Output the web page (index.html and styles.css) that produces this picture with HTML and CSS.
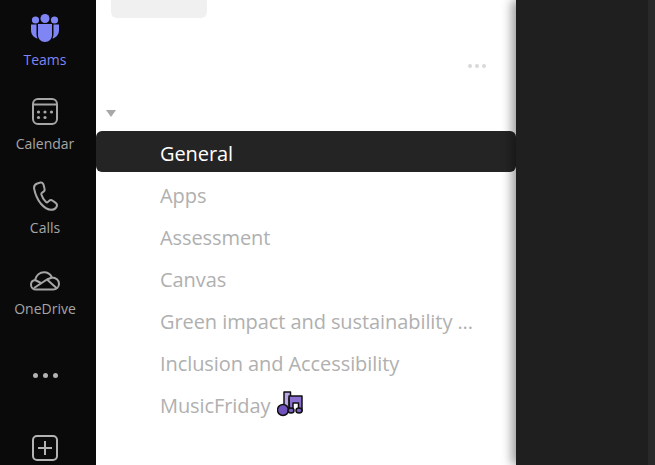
FILE: index.html
```html
<!DOCTYPE html>
<html lang="en">
<head>
  <meta charset="UTF-8" />
  <title>Teams</title>
  <link rel="stylesheet" href="styles.css">
</head>
<body>

<nav class="rail">
  <div class="rail-item active">
    <svg class="rail-icon" width="32" height="30" viewBox="0 0 32 30" fill="#7f85f5">
      <circle cx="16" cy="5.500" r="4.500"/>
      <circle cx="6.500" cy="7" r="3.600"/>
      <circle cx="25.500" cy="7" r="3.600"/>
      <path d="M2 11.500h5.500v9c0 2 .4 3.600 1.200 5C5 25 2 21.500 2 17z"/>
      <path d="M30 11.500h-5.500v9c0 2-.4 3.600-1.200 5C27 25 30 21.500 30 17z"/>
      <path d="M9 11h14v11c0 4-3 7-7 7s-7-3-7-7z"/>
    </svg>
    <span>Teams</span>
  </div>
  <div class="rail-item">
    <svg class="rail-icon" width="28" height="30" viewBox="0 0 28 30" fill="none" stroke="#a6a6a6" stroke-width="2">
      <rect x="2" y="2" width="24" height="25" rx="5"/>
      <path d="M2 7.500h24"/>
      <g fill="#a6a6a6" stroke="none">
        <circle cx="7.500" cy="15" r="1.600"/><circle cx="14" cy="15" r="1.600"/><circle cx="20.500" cy="15" r="1.600"/>
        <circle cx="7.500" cy="20.500" r="1.600"/><circle cx="14" cy="20.500" r="1.600"/>
      </g>
    </svg>
    <span>Calendar</span>
  </div>
  <div class="rail-item">
    <svg class="rail-icon" width="28" height="30" viewBox="0 0 28 30" fill="none" stroke="#a6a6a6" stroke-width="2">
      <path d="M9.500 1.500l-3.200 1C3.700 3.400 2.700 5.500 3.200 8c1 5 3 10 6.500 14.500 3 3.500 6.500 6.300 10.300 6.300 2.500 0 4.800-1.300 5.700-3.300.6-1.400.2-2.700-1-3.600l-3-2.200c-1.200-.9-2.600-.8-3.700.2l-1 1c-.6.600-1.400.6-2 .1-2.300-2-3.800-4.500-4.600-7.400-.2-.8 0-1.500.7-1.900l1.200-.8c1.200-.8 1.600-2 1.200-3.300l-1.100-4.300C11.600 1.800 10.600 1.200 9.500 1.500z"/>
    </svg>
    <span>Calls</span>
  </div>
  <div class="rail-item onedrive">
    <svg class="rail-icon" width="30" height="20" viewBox="0 0 30 20" fill="none" stroke="#a6a6a6" stroke-width="2">
      <path d="M6 18.500c-2.700 0-5-2-5-4.800 0-2.400 1.700-4.300 4-4.700C6.300 4.300 10 1.300 14 1.300c3.500 0 6.500 2 8 5.200 3.900.1 7 2.700 7 6.200 0 3.300-2.500 5.800-5.800 5.800z"/>
      <path d="M4 17l13-8.500 10 9M5 9l7 3.500M22 6.500l-5 2"/>
    </svg>
    <span>OneDrive</span>
  </div>
  <div class="rail-more"><i></i><i></i><i></i></div>
  <svg class="rail-add" width="28" height="28" viewBox="0 0 28 28" fill="none" stroke="#b3b3b3" stroke-width="2">
    <rect x="2" y="2" width="24" height="24" rx="4"/>
    <path d="M14 7v14M7 14h14"/>
  </svg>
</nav>

<section class="panel">
  <div class="tile"></div>
  <div class="team-more"><i></i><i></i><i></i></div>
  <div class="caret"></div>
  <ul class="channels">
    <li class="selected">General</li>
    <li>Apps</li>
    <li>Assessment</li>
    <li>Canvas</li>
    <li>Green impact and sustainability ...</li>
    <li>Inclusion and Accessibility</li>
    <li>MusicFriday
      <svg class="emoji" width="26" height="26" viewBox="0 0 26 26">
        <path d="M7 1h6.500v6H12v12H7z" fill="#b9a7e8" stroke="#111" stroke-width="1.500" stroke-linejoin="round"/>
        <circle cx="6" cy="19" r="5.500" fill="#6f52bd" stroke="#111" stroke-width="1.500"/>
        <path d="M12 5h13v15h-3.500v-8h-5.500v8h-3.500z" fill="#8a6fd1" stroke="#111" stroke-width="1.500" stroke-linejoin="round"/>
        <ellipse cx="14" cy="19.500" rx="3" ry="2.500" fill="#7a5fc0" stroke="#111" stroke-width="1.500"/>
        <ellipse cx="22" cy="19.500" rx="3" ry="2.500" fill="#7a5fc0" stroke="#111" stroke-width="1.500"/>
      </svg>
    </li>
  </ul>
</section>

<main class="content"></main>
<div class="edge"></div>

</body>
</html>
```

FILE: styles.css
```css
body {
  margin: 0;
  width: 655px;
  height: 465px;
  overflow: hidden;
  display: flex;
  background-color: #1f1f1f;
  font-family: "Open Sans", sans-serif;
}

.rail {
  width: 90px;
  height: 465px;
  padding-right: 6px;
  flex: none;
  background-color: #0a0a0a;
  display: flex;
  flex-direction: column;
  align-items: center;
  overflow: hidden;
}

.rail-item {
  margin-top: 22px;
  padding-bottom: 5px;
  flex: none;
  display: flex;
  flex-direction: column;
  align-items: center;
  color: #a6a6a6;
  font-size: 14px;
  line-height: 20px;
}

.rail-item:first-child {
  margin-top: 13px;
}

.rail-icon {
  margin-bottom: 7px;
}

.rail-item.active {
  color: #7f85f5;
}

.rail-item.onedrive {
  margin-top: 28px;
}

.rail-item.onedrive .rail-icon {
  margin-bottom: 8px;
}

.rail-more {
  display: flex;
  gap: 5px;
  margin-top: 49px;
  flex: none;
}

.rail-more i {
  width: 5px;
  height: 5px;
  border-radius: 50%;
  background-color: #b3b3b3;
}

.rail-add {
  margin-top: 56px;
  flex: none;
}

.panel {
  width: 420px;
  height: 465px;
  flex: none;
  background-color: white;
}

.tile {
  width: 96px;
  height: 18px;
  margin-left: 15px;
  background-color: #f0f0f0;
  border-radius: 0 0 6px 6px;
}

.team-more {
  display: flex;
  justify-content: flex-end;
  gap: 3px;
  padding-right: 30px;
  margin-top: 46px;
}

.team-more i {
  width: 4px;
  height: 4px;
  border-radius: 50%;
  background-color: #d9d9d9;
}

.caret {
  width: 0;
  height: 0;
  margin: 42px 0 0 10px;
  border-left: 5px solid transparent;
  border-right: 5px solid transparent;
  border-top: 7px solid #a8a8a8;
}

.channels {
  list-style: none;
  margin: 14px 0 0;
  padding: 0;
  font-size: 20px;
  letter-spacing: -0.08px;
  color: #b0b0b0;
}

.channels li {
  height: 42px;
  box-sizing: border-box;
  padding: 2px 0 0 64px;
  display: flex;
  align-items: center;
  gap: 7px;
  white-space: nowrap;
}

.channels .selected {
  height: 41px;
  margin-bottom: 1px;
  padding-top: 4px;
  background-color: #242424;
  border-radius: 6px;
  color: white;
}

.emoji {
  flex: none;
  margin-top: -2px;
}

.content {
  flex: 1;
  box-shadow: -4px 0 10px rgba(0,0,0,0.4);
  z-index: 1;
}

.edge {
  width: 7px;
  flex: none;
  background-color: #292929;
  z-index: 1;
}
```
